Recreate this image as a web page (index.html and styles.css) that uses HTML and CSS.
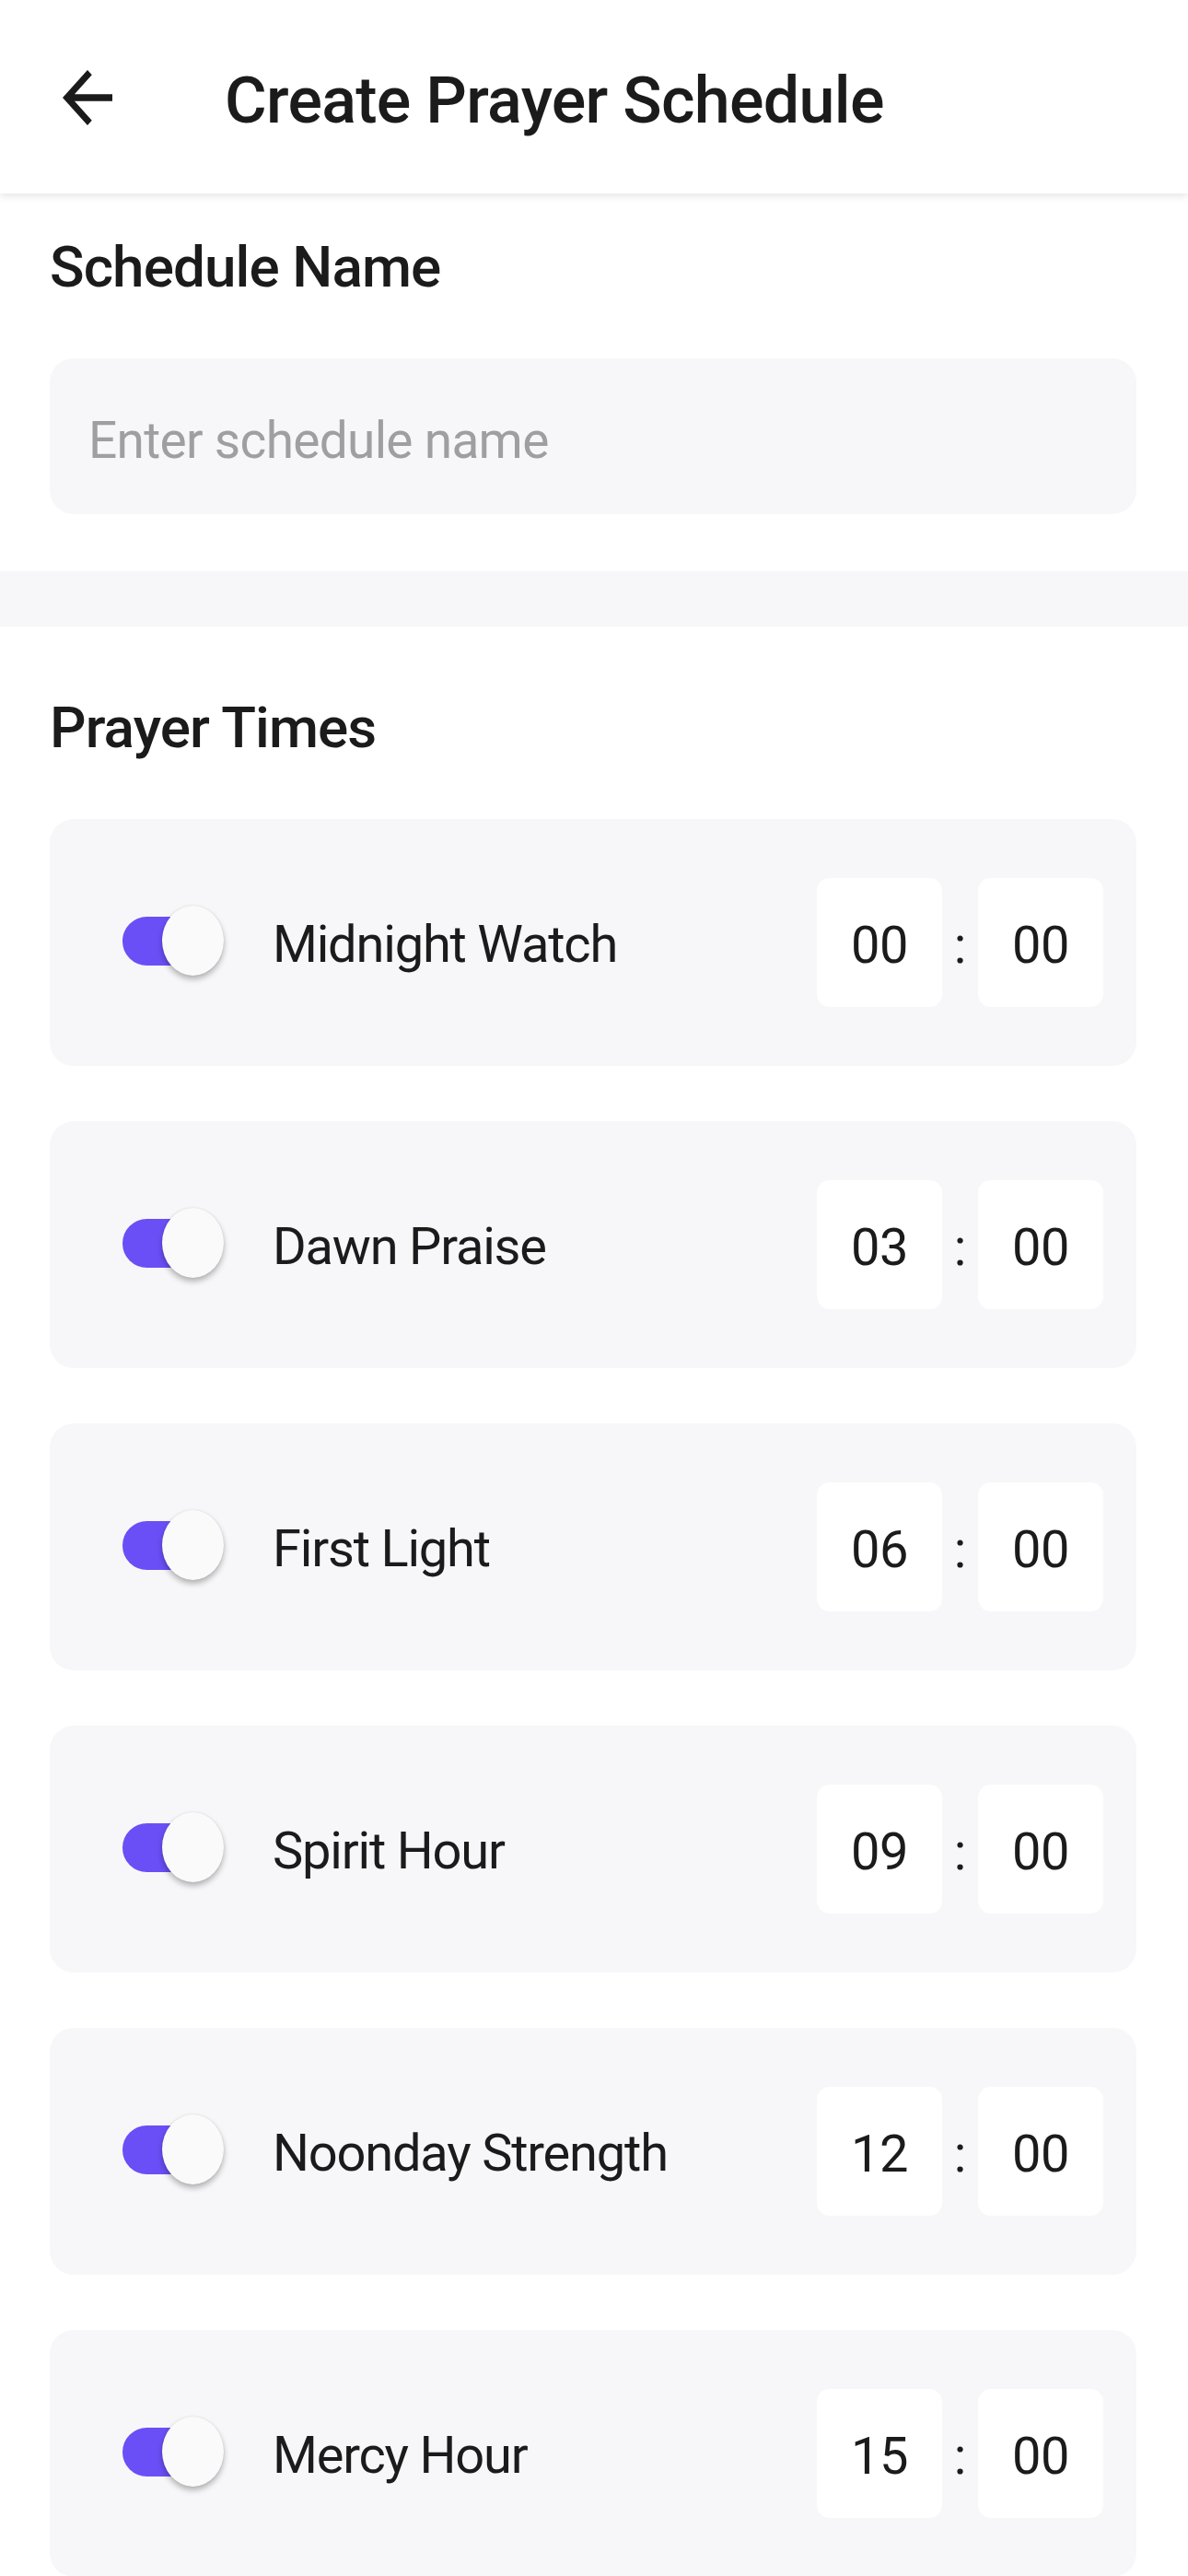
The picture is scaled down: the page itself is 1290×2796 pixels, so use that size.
FILE: index.html
```html
<!DOCTYPE html>
<html lang="en">
<head>
<meta charset="utf-8">
<title>Create Prayer Schedule</title>
<link rel="stylesheet" href="styles.css">
</head>
<body>
<header class="app-bar">
  <button class="back" aria-label="Back">
    <svg class="back-icon" viewBox="4 4 16 16" preserveAspectRatio="none" aria-hidden="true">
      <path d="M20 11H7.83l5.59-5.59L12 4l-8 8 8 8 1.41-1.41L7.83 13H20v-2z" fill="#1b1b1b"/>
    </svg>
  </button>
  <h1 class="title">Create Prayer Schedule</h1>
</header>

<main>
  <section class="section section-name">
    <h2 class="section-title">Schedule Name</h2>
    <div class="text-input"><span class="placeholder">Enter schedule name</span></div>
  </section>

  <div class="band"></div>

  <section class="section section-times">
    <h2 class="section-title">Prayer Times</h2>
    <ul class="time-list">
      <li class="time-card">
        <span class="switch"><span class="track"></span><span class="knob"></span></span>
        <span class="label">Midnight Watch</span>
        <span class="time"><span class="box">00</span><span class="colon">:</span><span class="box">00</span></span>
      </li>
      <li class="time-card">
        <span class="switch"><span class="track"></span><span class="knob"></span></span>
        <span class="label">Dawn Praise</span>
        <span class="time"><span class="box">03</span><span class="colon">:</span><span class="box">00</span></span>
      </li>
      <li class="time-card">
        <span class="switch"><span class="track"></span><span class="knob"></span></span>
        <span class="label">First Light</span>
        <span class="time"><span class="box">06</span><span class="colon">:</span><span class="box">00</span></span>
      </li>
      <li class="time-card">
        <span class="switch"><span class="track"></span><span class="knob"></span></span>
        <span class="label">Spirit Hour</span>
        <span class="time"><span class="box">09</span><span class="colon">:</span><span class="box">00</span></span>
      </li>
      <li class="time-card">
        <span class="switch"><span class="track"></span><span class="knob"></span></span>
        <span class="label">Noonday Strength</span>
        <span class="time"><span class="box">12</span><span class="colon">:</span><span class="box">00</span></span>
      </li>
      <li class="time-card">
        <span class="switch"><span class="track"></span><span class="knob"></span></span>
        <span class="label">Mercy Hour</span>
        <span class="time"><span class="box">15</span><span class="colon">:</span><span class="box">00</span></span>
      </li>
    </ul>
  </section>
</main>
</body>
</html>
```

FILE: styles.css
```css
* {
  box-sizing: border-box;
}

html, body {
  margin: 0;
  padding: 0;
  background: #ffffff;
}

body {
  font-family: Roboto, "Noto Sans", "Liberation Sans", sans-serif;
  color: #1b1b1b;
  overflow-x: hidden;
}

.app-bar {
  position: relative;
  z-index: 2;
  height: 210px;
  display: flex;
  align-items: center;
  padding-left: 68px;
  background: #ffffff;
  box-shadow: 0 3px 8px rgba(0, 0, 0, 0.10);
}

.back {
  display: flex;
  align-items: center;
  justify-content: center;
  width: 54px;
  height: 60px;
  padding: 0;
  border: 0;
  background: none;
  margin-top: 2px;
}

.back-icon {
  width: 54px;
  height: 60px;
  display: block;
}

.title {
  margin: 8px 0 0 122px;
  font-size: 70px;
  font-weight: 500;
  line-height: 1.2;
  color: #1b1b1b;
  letter-spacing: -0.7px;
}

.section {
  padding: 0 56px 0 54px;
}

.section-name {
  padding-top: 43px;
  padding-bottom: 62px;
}

.section-times {
  padding-top: 73px;
}

.section-title {
  margin: 0;
  font-size: 62px;
  font-weight: 500;
  line-height: 74px;
  color: #1b1b1b;
  letter-spacing: -0.9px;
}

.text-input {
  margin-top: 62px;
  height: 169px;
  border-radius: 26px;
  background: #f7f7f9;
  display: flex;
  align-items: center;
  padding: 8px 42px 0 42px;
}

.placeholder {
  font-size: 55px;
  line-height: 1.2;
  color: #9f9fa1;
  letter-spacing: -0.7px;
}

.band {
  height: 60px;
  background: #f7f7f9;
}

.time-list {
  list-style: none;
  margin: 62px 0 0 0;
  padding: 0;
  display: flex;
  flex-direction: column;
  gap: 60px;
}

.time-card {
  height: 268px;
  border-radius: 26px;
  background: #f7f7f9;
  display: flex;
  align-items: center;
  padding: 0 36px 0 79px;
}

.switch {
  position: relative;
  flex: none;
  width: 110px;
  height: 76px;
  margin-right: 53px;
  margin-top: -4px;
}

.track {
  position: absolute;
  left: 0;
  top: 12px;
  width: 100px;
  height: 53px;
  border-radius: 27px;
  background: #6a4ff6;
}

.knob {
  position: absolute;
  right: 0;
  top: 0;
  width: 67px;
  height: 76px;
  border-radius: 50%;
  background: #fafafa;
  box-shadow: 0 4px 6px rgba(0, 0, 0, 0.28), 0 0 2px rgba(0, 0, 0, 0.10);
}

.label {
  flex: 1;
  font-size: 56px;
  line-height: 1.2;
  padding-top: 6px;
  color: #1b1b1b;
  white-space: nowrap;
  letter-spacing: -1.2px;
}

.time {
  display: flex;
  align-items: center;
  flex: none;
}

.box {
  width: 136px;
  height: 140px;
  border-radius: 14px;
  background: #ffffff;
  display: flex;
  align-items: center;
  justify-content: center;
  padding-top: 8px;
  font-size: 56px;
  line-height: 1.2;
  color: #1b1b1b;
  letter-spacing: -0.5px;
}

.colon {
  width: 39px;
  text-align: center;
  font-size: 56px;
  line-height: 1.2;
  padding-top: 8px;
  color: #1b1b1b;
}
```
